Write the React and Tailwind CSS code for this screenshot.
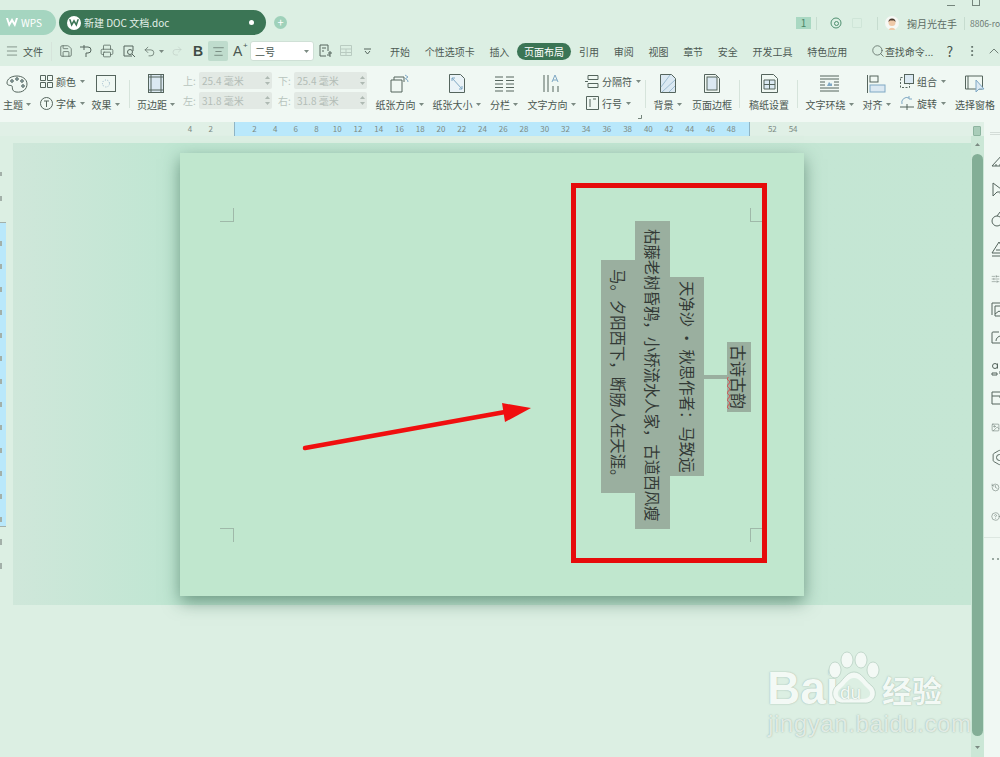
import {
  Menu, Save, Printer, Undo2, Redo2, AlignCenter, ChevronUp, Search, MoreVertical,
  SlidersHorizontal, Image as ImageIcon, History, CircleHelp, Hexagon,
} from "lucide-react";

const stroke = "#55655d";
const accent = "#7fa8c4";

function Caret({ className = "" }) {
  return (
    <svg width="5" height="3" viewBox="0 0 5 3" className={`shrink-0 ${className}`}>
      <path d="M0 0h5L2.5 3z" fill="#7b8a82" />
    </svg>
  );
}

function Ico({ w = 20, h = 20, children, className = "" }) {
  return (
    <svg width={w} height={h} viewBox={`0 0 ${w} ${h}`} fill="none" stroke={stroke} strokeWidth="1" className={`shrink-0 ${className}`}>
      {children}
    </svg>
  );
}

// big ribbon button: icon on top, label below
function Big({ w, label, caret, icon, className = "" }) {
  return (
    <div className={`flex flex-col items-center shrink-0 pt-[7px] ${className}`} style={{ width: w }}>
      <div className="h-[21px] flex items-center justify-center">{icon}</div>
      <div className="h-[20px] flex items-center gap-[3px] text-[10px] text-[#4a5751] whitespace-nowrap">
        {label}
        {caret && <Caret />}
      </div>
    </div>
  );
}

function Small({ icon, label, caret }) {
  return (
    <div className="h-[22px] flex items-center text-[10px] text-[#4a5751] whitespace-nowrap">
      <span className="w-[16px] flex justify-center mr-[1px]">{icon}</span>
      <span className="ml-[1px]">{label}</span>
      {caret && <Caret className="ml-[4px]" />}
    </div>
  );
}

function Sep({ className = "" }) {
  return <div className={`w-px h-[28px] bg-[#d6e4db] shrink-0 self-center ${className}`} />;
}

function MarginInput({ label, value }) {
  return (
    <div className="flex items-center h-[17px] gap-[2px]">
      <span className="w-[14px] text-[10px] text-[#b8c4bd]">{label}</span>
      <div className="w-[73px] h-[17px] bg-[#e2e9e4] rounded-[2px] flex items-center justify-between pl-[3px] pr-[2px] text-[10px] text-[#b3bdb7]">
        <span>{value}</span>
        <span className="flex flex-col gap-[3px]">
          <Caret className="rotate-180 opacity-50" />
          <Caret className="opacity-50" />
        </span>
      </div>
    </div>
  );
}

const menus = ["开始", "个性选项卡", "插入", "页面布局", "引用", "审阅", "视图", "章节", "安全", "开发工具", "特色应用"];
const rulerBlue = ["2", "4", "6", "8", "10", "12", "14", "16", "18", "20", "22", "24", "26", "28", "30", "32", "34", "36", "38", "40", "42", "44", "46", "48"];
const vTicks = [1, 2, 3, 4, 5, 6, 7, 8, 9, 10, 11, 12, 13];

// side panel icons, only their left part shows inside the window
const sideIcons = [
  <Ico w={16} h={16}><path d="M1 14L12 2l3 12zM5 14v-2M9 14v-2M12 14v-2" /></Ico>,
  <Ico w={16} h={16}><path d="M2 1v13l4-4h8zM9 11l2 4" /></Ico>,
  <Ico w={16} h={16}><circle cx="6" cy="10" r="5" /><path d="M6 5l3-4h6" /></Ico>,
  <Ico w={16} h={16}><path d="M1 12L8 1l7 11zM5 9h6M1 15h14" /></Ico>,
  <SlidersHorizontal size={16} strokeWidth={1.2} color={stroke} />,
  <Ico w={16} h={16}><path d="M1 14V2h13M4 15V5h12v10zM4 13l4-3 3 2 3-2" /></Ico>,
  <Ico w={16} h={16}><path d="M8 2H2a1 1 0 0 0-1 1v10h15M5 11a5 5 0 0 1 5-5" /></Ico>,
  <Ico w={16} h={16}><circle cx="4" cy="6" r="2.500" /><path d="M6.500 3.500v5M1 13h5v2H1zM9 3h6M9 11h6v3H9z" /></Ico>,
  <Ico w={16} h={16}><path d="M1 2h15v12H1zM1 6h8v2" /></Ico>,
  <ImageIcon size={17} strokeWidth={1.3} color={stroke} />,
  <div className="relative">
    <Hexagon size={17} strokeWidth={1.3} color={stroke} />
    <span className="absolute left-[5px] top-[5px] w-[7px] h-[7px] rounded-full border border-[#55655d]" />
  </div>,
  <History size={17} strokeWidth={1.3} color={stroke} />,
  <CircleHelp size={17} strokeWidth={1.3} color={stroke} />,
];

// the mind map boxes, turned sideways on the page
const nodes = [
  { text: "古诗", red: "古韵", box: "left-[547px] top-[189px] w-[24px] h-[70px] text-[16px]" },
  { text: "天净沙 · 秋思作者\uFF1A马致远", box: "left-[490px] top-[124px] w-[34px] h-[199px]" },
  { text: "枯藤老树昏鸦\uFF0C小桥流水人家\uFF0C古道西风瘦", box: "left-[455px] top-[68px] w-[35px] h-[308px]" },
  { text: "马。夕阳西下\uFF0C断肠人在天涯。", box: "left-[421px] top-[107px] w-[34px] h-[233px]" },
];

function Corner({ className }) {
  return <div className={`absolute w-[14px] h-[14px] border-[#9fb9a9] ${className}`} />;
}

export default function App() {
  return (
    <div
      className="w-[1000px] h-[757px] overflow-hidden relative flex flex-col bg-[#dcefe3] text-[#4a5751]"
      style={{ fontFamily: '"Noto Sans CJK SC", "Liberation Sans", sans-serif' }}
    >
      {/* title bar */}
      <div className="h-[36px] shrink-0 flex items-start relative whitespace-nowrap">
        <div className="mt-[10px] w-[56px] h-[25px] rounded-r-[13px] bg-[#a5d5c0] flex items-center pl-[6px] gap-[3px] text-[10px] text-white shrink-0">
          <svg width="12" height="9" viewBox="0 0 12 9"><path d="M0 0l3 9 3-5 3 5 3-9h-2L8.600 4.500 6 0 3.400 4.500 2 0z" fill="#fff" /></svg>
          <span>WPS</span>
        </div>
        <div className="mt-[10px] ml-[3px] w-[207px] h-[25px] rounded-[13px] bg-[#3b7555] flex items-center pl-[8px] text-[10px] text-[#e3f0e8] shrink-0">
          <span className="w-[14px] h-[14px] rounded-full bg-white flex items-center justify-center shrink-0">
            <svg width="10" height="8" viewBox="0 0 12 9"><path d="M0 0l3 9 3-5 3 5 3-9h-2L8.600 4.500 6 0 3.400 4.500 2 0z" fill="#3b7555" /></svg>
          </span>
          <span className="ml-[3px] w-[90px]">新建 DOC 文档.doc</span>
          <span className="w-[5px] h-[5px] rounded-full bg-white ml-[75px] shrink-0" />
        </div>
        <div className="mt-[16px] ml-[8px] w-[13px] h-[13px] rounded-full bg-[#9fd1ba] flex items-center justify-center text-white text-[11px] leading-none shrink-0">+</div>
        <div className="ml-[509px] mt-[17px] flex items-center h-[12px] shrink-0">
          <span className="w-[15px] h-[12px] bg-[#a9d8c2] text-[10px] leading-[12px] text-center text-[#4b8668]">1</span>
          <span className="w-px h-[13px] bg-[#c6dccf] ml-[5px]" />
          <svg width="12" height="12" viewBox="0 0 12 12" className="ml-[13px]" fill="none" stroke="#4f8f70">
            <circle cx="6" cy="6" r="5" />
            <circle cx="6.500" cy="6.500" r="2" />
          </svg>
          <span className="w-[10px] h-[10px] border border-[#cfe5d8] ml-[10px] rounded-[1px]" />
          <span className="w-px h-[13px] bg-[#c6dccf] ml-[15px]" />
          <svg width="14" height="14" viewBox="0 0 14 14" className="ml-[7px]">
            <circle cx="7" cy="7" r="7" fill="#f6f8f4" />
            <circle cx="7" cy="6.500" r="3.500" fill="#efc9a8" />
            <path d="M3.500 6a3.500 3.500 0 0 1 7 0L9 4.500H5z" fill="#4a3a2e" />
            <path d="M4 14c0-3 6-3 6 0z" fill="#efc9a8" />
          </svg>
          <span className="ml-[8px] text-[10px] text-[#5d6b64] w-[50px]">掬月光在手</span>
          <span className="w-px h-[13px] bg-[#c6dccf] ml-[7px]" />
          <span className="ml-[5px] text-[8.500px] text-[#6d7b74] w-[30px]">8806-ro</span>
        </div>
        {/* window buttons, cut off by the top of the shot */}
        <div className="absolute top-[5px] left-[947px] w-[8px] h-px bg-[#75857c]" />
        <div className="absolute -top-[3px] left-[972px] w-[8px] h-[9px] border border-[#75857c]" />
      </div>

      {/* menu bar */}
      <div className="h-[30px] shrink-0 flex items-center text-[10px] text-[#4a5751] whitespace-nowrap [&>*]:shrink-0">
        <Menu size={14} strokeWidth={1.1} className="ml-[5px]" color={stroke} />
        <span className="ml-[4px] w-[20px]">文件</span>
        <Sep className="ml-[8px] !h-[19px]" />
        <Save size={14} strokeWidth={1.3} color={stroke} className="ml-[7px]" />
        <Ico w={13} h={14} className="ml-[7px]"><path d="M0 3h8a3 3 0 0 1 0 6H6v4M4 1v5" /></Ico>
        <Printer size={14} strokeWidth={1.3} color={stroke} className="ml-[7px]" />
        <Ico w={14} h={14} className="ml-[8px]">
          <path d="M10 12H2V2h9v5" />
          <circle cx="8" cy="8" r="2.500" />
          <path d="M10 10l3 3" />
        </Ico>
        <Undo2 size={13} strokeWidth={1.3} color={stroke} className="ml-[7px]" />
        <Caret className="ml-[3px]" />
        <Redo2 size={12} strokeWidth={1.2} color="#bccbc3" className="ml-[7px]" />
        <span className="ml-[9px] w-[12px] text-[14px] leading-none font-bold text-[#3f4c46] text-center [font-family:'Liberation_Sans']">B</span>
        <span className="ml-[4px] w-[20px] h-[20px] rounded-[2px] bg-[#bfdccd] flex items-center justify-center">
          <AlignCenter size={13} strokeWidth={1.2} color={stroke} />
        </span>
        <span className="ml-[5px] w-[17px] text-[14px] leading-none relative [font-family:'Liberation_Sans']">
          A<span className="absolute -top-[2px] left-[10px] text-[8px]">+</span>
        </span>
        <div className="w-[64px] h-[20px] rounded-[3px] bg-white border border-[#cfe0d6] flex items-center justify-between pl-[4px] pr-[4px] text-[10px]">
          二号
          <Caret />
        </div>
        <Ico w={14} h={14} className="ml-[5px]">
          <path d="M7 12H1V1h8v6M3 4h4M3 7h2" />
          <path d="M9 9h4M11 7v6M8 11h3" />
        </Ico>
        <svg width="13" height="12" viewBox="0 0 13 12" fill="none" stroke="#b9cbc1" className="ml-[7px]">
          <path d="M.5.500h11v10H.5zM.5 4h11M.5 7.500h11M6 4v6.500" />
        </svg>
        <svg width="7" height="7" viewBox="0 0 7 7" fill="none" stroke={stroke} className="ml-[11px]">
          <path d="M0 1h7M1 3l2.500 3L6 3" />
        </svg>
        <div className="ml-[19px] flex items-center">
          {menus.map((m) =>
            m === "页面布局" ? (
              <span key={m} className="-ml-[7px] mr-[8px] w-[54px] h-[17px] rounded-[9px] bg-[#3b7555] text-white text-center leading-[17px]">
                {m}
              </span>
            ) : (
              <span key={m} className="mr-[14.700px] text-[#4d5a54]">
                {m}
              </span>
            )
          )}
        </div>
        <Search size={14} strokeWidth={1.3} color={stroke} className="ml-[9px]" />
        <span className="w-[50px]">查找命令...</span>
        <span className="ml-[9px] w-[12px] text-center text-[14px]">?</span>
        <MoreVertical size={14} strokeWidth={1.5} color={stroke} className="ml-[9px]" />
        <ChevronUp size={16} strokeWidth={1.2} color={stroke} className="ml-[7px]" />
      </div>

      {/* ribbon */}
      <div className="h-[56px] shrink-0 bg-[#f0f8f3] flex items-stretch pl-[2px] relative">
        <Big w={30} label="主题" caret icon={
          <Ico w={22} h={18}>
            <path d="M11 1C5 1 1 4 1 8c0 3 4 2 5 3s-1 5 4 6c7 1 11-3 11-8S16 1 11 1z" />
            <circle cx="6" cy="6" r="1.300" fill="#a9c3d3" />
            <circle cx="11" cy="4" r="1.300" fill="#a9c3d3" />
            <circle cx="16" cy="6" r="1.300" fill="#a9c3d3" />
            <circle cx="17" cy="11" r="1.300" fill="#a9c3d3" />
          </Ico>
        } />
        <div className="ml-[6px] w-[52px] flex flex-col pt-[4px] shrink-0">
          <Small caret label="颜色" icon={
            <Ico w={13} h={13}>
              <path d="M.5.500h5v5h-5zM7.500.500h5v5h-5zM.5 7.500h5v5h-5zM7.500 7.500h5v5h-5z" />
            </Ico>
          } />
          <Small caret label="字体" icon={
            <Ico w={13} h={13}>
              <circle cx="6.500" cy="6.500" r="6" />
              <path d="M4 4h5M6.500 4v6" />
            </Ico>
          } />
        </div>
        <Big w={27} className="ml-[2px]" label="效果" caret icon={
          <Ico w={20} h={17}>
            <rect x=".5" y=".5" width="19" height="16" />
            <circle cx="10" cy="8.500" r="3.500" stroke="#8fb0c6" strokeDasharray="1 1.500" />
          </Ico>
        } />
        <Sep className="ml-[10px]" />
        <Big w={38} className="ml-[7px]" label="页边距" caret icon={
          <Ico w={16} h={19}>
            <rect x=".5" y=".5" width="15" height="18" fill="#dbe9f2" />
            <path d="M3 .5v18M13 .5v18M.5 3h15M.5 16h15" />
          </Ico>
        } />
        <div className="ml-[8px] w-[89px] flex flex-col gap-[3px] pt-[6px] shrink-0">
          <MarginInput label="上:" value="25.4 毫米" />
          <MarginInput label="左:" value="31.8 毫米" />
        </div>
        <div className="ml-[6px] w-[89px] flex flex-col gap-[3px] pt-[6px] shrink-0">
          <MarginInput label="下:" value="25.4 毫米" />
          <MarginInput label="右:" value="31.8 毫米" />
        </div>
        <Big w={47} className="ml-[9px]" label="纸张方向" caret icon={
          <Ico w={20} h={19}>
            <path d="M4 3h10v5M4 3v3" />
            <path d="M1 6h11v12H1z" fill="#f0f8f3" />
            <path d="M15 1l3 2-3 2M18 8a3 3 0 0 0-2-3" stroke={accent} />
          </Ico>
        } />
        <Big w={47} className="ml-[10px]" label="纸张大小" caret icon={
          <Ico w={16} h={19}>
            <path d="M.5.500h11l4 4v14H.5z" fill="#eaf3f7" />
            <path d="M3 4l10 11M3 4h3M3 4v3M13 15h-3M13 15v-3" stroke={accent} />
          </Ico>
        } />
        <Big w={28} className="ml-[10px]" label="分栏" caret icon={
          <Ico w={19} h={16}>
            <path d="M0 1h8M0 4.500h8M0 8h8M0 11.500h8M0 15h8M11 1h8M11 4.500h8M11 8h8M11 11.500h8M11 15h8" />
          </Ico>
        } />
        <Big w={47} className="ml-[10px]" label="文字方向" caret icon={
          <Ico w={18} h={19}>
            <path d="M1 1v17M5 1v17M10 12v6M15 12v6" />
            <path d="M9 8l3-7 3 7M10 6h4" stroke={accent} />
          </Ico>
        } />
        <div className="ml-[9px] w-[58px] flex flex-col pt-[4px] shrink-0">
          <Small caret label="分隔符" icon={
            <Ico w={14} h={13}>
              <path d="M3 .5h10v4H3zM3 8.500h10v4H3zM0 6.500h3" />
            </Ico>
          } />
          <Small caret label="行号" icon={
            <Ico w={13} h={14}>
              <path d="M.5.500h12v13H.5zM4 3v8M7 3h3" />
            </Ico>
          } />
        </div>
        <Sep className="ml-[3px]" />
        <Big w={29} className="ml-[7px]" label="背景" caret icon={
          <Ico w={16} h={19}>
            <path d="M.5.500h11l4 4v14H.5z" fill="#dbe9f2" />
            <path d="M1 13L10 1M2 18L15 6M9 18l6-6" stroke="#9dbdd1" />
          </Ico>
        } />
        <Big w={42} className="ml-[9px]" label="页面边框" icon={
          <Ico w={16} h={19}>
            <path d="M.5.500h11l4 4v14H.5z" />
            <rect x="3" y="3" width="10" height="13" fill="#dbe9f2" />
          </Ico>
        } />
        <Sep className="ml-[6px]" />
        <Big w={40} className="ml-[9px]" label="稿纸设置" icon={
          <Ico w={17} h={19}>
            <path d="M.5.500h12l4 4v14H.5z" />
            <path d="M3 6h11v9H3zM8.500 6v9M3 10.500h11" fill="#dbe9f2" />
          </Ico>
        } />
        <Sep className="ml-[8px]" />
        <Big w={47} className="ml-[8px]" label="文字环绕" caret icon={
          <Ico w={19} h={17}>
            <path d="M0 1h19M0 4h19M0 7h5M14 7h5M0 10h5M14 10h5M0 13h19M0 16h19" />
            <path d="M7 11l2-4 2 2 1-1v3z" fill={accent} stroke="none" />
          </Ico>
        } />
        <Big w={27} className="ml-[10px]" label="对齐" caret icon={
          <Ico w={19} h={18}>
            <path d="M.5 0v18" />
            <rect x="3" y="1" width="8" height="6" />
            <rect x="3" y="10" width="15" height="7" fill="#dbe9f2" stroke={accent} />
          </Ico>
        } />
        <div className="ml-[9px] w-[49px] flex flex-col pt-[4px] shrink-0">
          <Small caret label="组合" icon={
            <Ico w={14} h={14}>
              <rect x=".5" y="3.500" width="9" height="10" strokeDasharray="2 1.500" />
              <rect x="4.500" y=".5" width="9" height="9" fill="#dbe9f2" />
            </Ico>
          } />
          <Small caret label="旋转" icon={
            <Ico w={14} h={14}>
              <path d="M0 11h14M7 8v6" />
              <path d="M2 8a5 5 0 0 1 7-6M9 0v3h3" stroke={accent} />
            </Ico>
          } />
        </div>
        <Big w={42} className="ml-[6px]" label="选择窗格" icon={
          <Ico w={20} h={20}>
            <path d="M.5 2h17v13H.5zM3 2v13" />
            <path d="M11 6v12l3-3h5z" fill="#dbe9f2" stroke={accent} />
          </Ico>
        } />
        <svg width="4" height="4" viewBox="0 0 4 4" fill="none" stroke="#75857c" className="absolute left-[638px] top-[49px]">
          <path d="M3.500 0v3.500H0" />
        </svg>
      </div>

      {/* horizontal ruler */}
      <div className="h-[14px] shrink-0 flex bg-[#e0f0e6] text-[8px] leading-[14px] text-[#7c8a83] text-center relative">
        <div className="w-[234px] flex justify-end pr-[13px]">
          <span className="w-[20.740px]">4</span>
          <span className="w-[20.740px]">2</span>
        </div>
        <div className="w-[516px] bg-[#b9e8fb] flex pl-[9px] border-x border-[#8fb4c4]">
          {rulerBlue.map((n) => (
            <span key={n} className="w-[20.740px] shrink-0">{n}</span>
          ))}
        </div>
        <div className="flex pl-[12px]">
          <span className="w-[20.740px]">52</span>
          <span className="w-[20.740px]">54</span>
        </div>
        {/* top of the side panel and the small pane button over the scrollbar */}
        <div className="absolute left-[973px] top-[4px] w-[8px] h-[10px] bg-[#a9cdb9] border border-[#8db49f] rounded-[1px]" />
        <div className="absolute left-[984px] top-0 w-[16px] h-[21px] z-10 bg-[#f0f8f3] pl-[6px] pt-[10px]">
          <div className="h-[3px] border-y border-[#d4ddd8]" />
        </div>
      </div>

      {/* document area */}
      <div className="flex-1 flex min-h-0">
        {/* vertical ruler */}
        <div className="w-[13px] shrink-0 pt-[25px] flex flex-col">
          <div className="h-[25px] flex items-center"><div className="w-[2px] h-[4px] bg-[#a3b0a9]" /></div>
          <div className="h-[25px] mb-[11px] flex items-center"><div className="w-[2px] h-[5px] bg-[#a3b0a9]" /></div>
          <div className="w-[6px] h-[305px] bg-[#b9e8fb] border-y border-[#a3b0a9] pt-[9px] flex flex-col">
            {vTicks.map((t) => (
              <div key={t} className="h-[23px] flex items-center shrink-0"><div className="w-[2px] h-[5px] bg-[#a3b0a9]" /></div>
            ))}
          </div>
          <div className="h-[24px] mt-[3px] flex items-center"><div className="w-[2px] h-[6px] bg-[#a3b0a9]" /></div>
          <div className="h-[24px] flex items-center"><div className="w-[2px] h-[6px] bg-[#a3b0a9]" /></div>
        </div>

        <div className="w-[958px] shrink-0 pt-[7px]">
          <div className="h-[462px] bg-linear-to-r from-[#cfe7da] via-[#bfe6d2] via-[17%] to-[#c5e6d4] pl-[167px] pt-[10px]">
            <div className="w-[624px] h-[443px] bg-[#c0e7ce] relative shadow-[0_6px_16px_rgba(40,90,65,0.55)]">
              <Corner className="left-[40px] top-[55px] border-r border-b" />
              <Corner className="left-[570px] top-[55px] border-l border-b" />
              <Corner className="left-[40px] top-[375px] border-r border-t" />
              <Corner className="left-[570px] top-[375px] border-l border-t" />

              {/* connector */}
              <div className="absolute left-[524px] top-[222px] w-[23px] h-[4px] bg-[#9aaf9f]" />
              {nodes.map((n) => (
                <div
                  key={n.text}
                  className={`absolute bg-[#9aaf9f] [writing-mode:vertical-rl] [text-orientation:sideways] text-[15.400px] leading-none text-[#333a36] flex items-center justify-center whitespace-nowrap overflow-hidden ${n.box}`}
                >
                  <span>
                    {n.text}
                    {n.red && (
                      <span className="underline decoration-wavy decoration-[#d8484a] decoration-1 [text-underline-position:left]">{n.red}</span>
                    )}
                  </span>
                </div>
              ))}

              {/* red box and arrow drawn over the shot */}
              <div className="absolute left-[391px] top-[30px] w-[196px] h-[380px] border-[5px] border-[#e60b0b]" />
              <svg width="240" height="60" viewBox="0 0 240 60" className="absolute left-[120px] top-[245px]">
                <path d="M5 50L205 14" stroke="#f00f0f" strokeWidth="4.500" strokeLinecap="round" />
                <path d="M231 10L202 5 205 24z" fill="#f00f0f" />
              </svg>
            </div>
          </div>
        </div>

        {/* scrollbar */}
        <div className="w-[13px] shrink-0 bg-[#cbe7d6] pt-[18px] relative">
          <div className="h-[582px] mx-[1px] rounded-[6px] bg-[#83ae96]" />
          <Caret className="absolute left-[4px] top-[7px] rotate-180" />
          <Caret className="absolute left-[4px] top-[610px]" />
        </div>

        {/* side panel, cut off by the window edge */}
        <div className="flex-1 bg-[#f0f8f3] flex flex-col pt-[9px] overflow-hidden">
          {sideIcons.map((icon, i) => (
            <div key={i} className="h-[29.750px] flex items-center shrink-0 pl-[7px]">
              {icon}
            </div>
          ))}
          <div className="h-px bg-[#dde7e1] mt-[5px]" />
          <div className="flex gap-[3px] pl-[8px] mt-[20px]">
            <span className="w-[2px] h-[2px] bg-[#9aa8a1] shrink-0" />
            <span className="w-[2px] h-[2px] bg-[#9aa8a1] shrink-0" />
          </div>
        </div>
      </div>

      {/* baidu watermark */}
      <div className="absolute left-[766px] top-[648px] w-[180px] h-[95px] text-[#f3f9f5] [text-shadow:0_0_1.5px_rgba(110,140,125,0.7)]">
        <span className="absolute left-[1px] top-[17px] text-[46px] leading-none font-bold [font-family:'Liberation_Sans']">Bai</span>
        <svg width="56" height="60" viewBox="0 0 56 60" className="absolute left-[60px] top-[2px]" fill="#f3f9f5" stroke="#a9c4b5" strokeOpacity="0.6">
          <ellipse cx="21" cy="10" rx="6" ry="8" />
          <ellipse cx="35" cy="10" rx="6" ry="8" />
          <ellipse cx="9" cy="20" rx="6" ry="8" />
          <ellipse cx="47" cy="20" rx="6" ry="8" />
          <path d="M28 22c8 0 11 9 18 14 7 7 2 18-8 17H18C8 54 3 43 10 36c7-5 10-14 18-14z" />
          <path d="M28 28c6 0 8 6 14 11 5 5 1 10-6 10H20c-7 0-11-5-6-10 6-5 8-11 14-11z" fill="#dcefe3" stroke="none" />
        </svg>
        <span className="absolute left-[74px] top-[35px] text-[19px] leading-none [font-family:'Liberation_Sans']">du</span>
        <span className="absolute left-[116px] top-[26px] text-[30px] leading-none font-bold">经验</span>
        <span className="absolute left-[2px] top-[64px] text-[24px] leading-none tracking-[0.6px] text-[#f3f9f5]/80 [font-family:'Liberation_Sans']">jingyan.baidu.com</span>
      </div>
    </div>
  );
}
